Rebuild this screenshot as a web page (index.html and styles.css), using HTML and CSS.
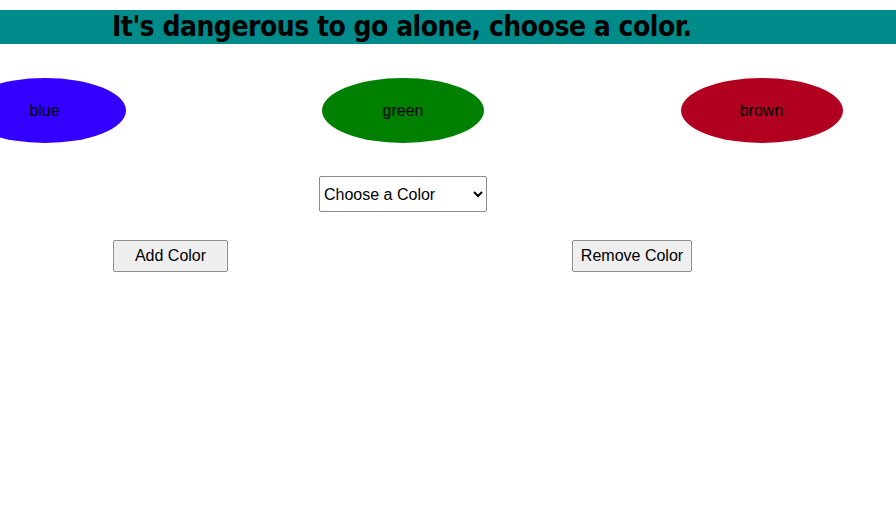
FILE: index.html
```html
<!DOCTYPE html>
<html>
<head>
<meta charset="utf-8">
<link rel="stylesheet" href="styles.css">
</head>
<body>
<div class="page">
  <h1 class="banner">It's dangerous to go alone, choose a color.</h1>
  <div class="ovals">
    <div class="oval blue">blue</div>
    <div class="oval green">green</div>
    <div class="oval brown">brown</div>
  </div>
  <div class="picker">
    <select class="select">
      <option>Choose a Color</option>
      <option>blue</option>
      <option>green</option>
      <option>brown</option>
    </select>
  </div>
  <div class="actions">
    <button class="btn add">Add Color</button>
    <button class="btn remove">Remove Color</button>
  </div>
</div>
</body>
</html>
```
FILE: styles.css
```css
html, body {
  margin: 0;
  padding: 0;
  background: #ffffff;
  font-family: "Liberation Sans", Arial, sans-serif;
  overflow: hidden;
}
.page {
  width: 896px;
}
.banner {
  margin: 10px 0 0 0;
  height: 34px;
  background: #008b8b;
  color: #000;
  font-family: "DejaVu Sans Condensed", "DejaVu Sans", sans-serif;
  font-stretch: condensed;
  font-weight: bold;
  font-size: 28px;
  letter-spacing: -0.5px;
  line-height: 34px;
  padding-left: 112px;
  white-space: nowrap;
}
.ovals {
  display: flex;
  gap: 196.5px;
  margin-top: 34px;
  margin-left: -36.5px;
}
.oval {
  flex: none;
  width: 162px;
  height: 65px;
  border-radius: 50%;
  display: flex;
  align-items: center;
  justify-content: center;
  font-size: 16px;
  color: #000;
}
.blue { background: #3300ff; }
.green { background: #008000; }
.brown { background: #b10020; }
.picker {
  margin-top: 33px;
  padding-left: 319px;
  height: 36px;
}
.select {
  width: 168px;
  height: 36px;
  font-family: "Liberation Sans", Arial, sans-serif;
  font-size: 16px;
  border: 1px solid #8a8a8a;
  border-radius: 2px;
  background: #fff;
  color: #000;
  padding: 0;
}
.actions {
  display: flex;
  margin-top: 28px;
  padding-left: 113px;
}
.btn {
  height: 32px;
  font-family: "Liberation Sans", Arial, sans-serif;
  font-size: 16px;
  color: #000;
  background: #efefef;
  border: 1px solid #8f8f8f;
  border-radius: 2px;
  padding: 0;
}
.add { width: 115px; }
.remove { width: 120px; margin-left: 344px; }
```
